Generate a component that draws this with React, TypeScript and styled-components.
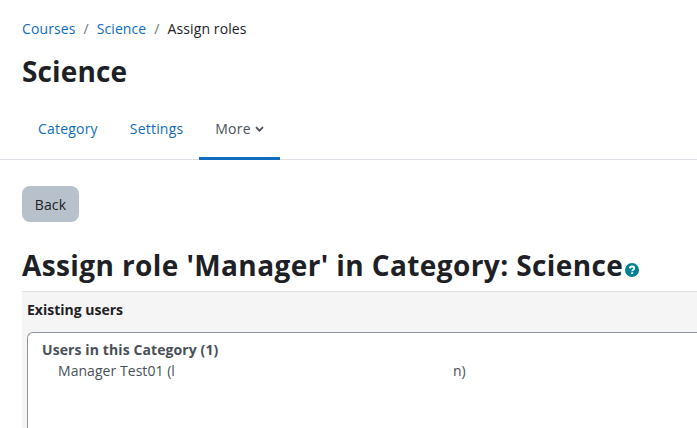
import React from 'react'
import styled, { createGlobalStyle } from 'styled-components'

const GlobalStyle = createGlobalStyle`
    html, body {
        margin: 0;
        padding: 0;
        background: #fff;
        overflow: hidden;
    }
    body {
        font-family: "Open Sans", "Noto Sans", "Liberation Sans", sans-serif;
        font-size: 14px;
        letter-spacing: 0.15px;
        color: #1d2125;
    }
`

const Page = styled.div`
    width: 697px;
    height: 428px;
    overflow: hidden;
`

const Header = styled.header`
    padding: 19px 22px 0;
`

const Breadcrumb = styled.nav`
    display: flex;
    align-items: center;
    height: 20px;
    font-size: 14px;
    line-height: 20px;
    letter-spacing: 0.1px;
`

const Crumb = styled.a`
    color: #0f6cbf;
`

const Separator = styled.span`
    color: #6a737b;
    margin: 0 8px;
`

const Title = styled.h1`
    margin: 10px 0 0;
    font-size: 28px;
    line-height: 44px;
    font-weight: 700;
    letter-spacing: 0.15px;
`

const Tabs = styled.nav`
    display: flex;
    height: 59px;
    margin-top: 7px;
    padding-left: 22px;
    border-bottom: 1px solid #dee2e6;
    letter-spacing: 0.2px;
`

const Tab = styled.a<{ $active?: boolean }>`
    display: flex;
    align-items: center;
    gap: 4px;
    height: 57px;
    padding: 0 16px;
    color: ${p => (p.$active ? '#495057' : '#0f6cbf')};
    border-bottom: 3px solid ${p => (p.$active ? '#0f6cbf' : 'transparent')};
`

const Main = styled.main`
    padding: 26px 0 0 22px;
`

const BackButton = styled.button`
    display: block;
    width: 57px;
    height: 36px;
    padding: 0;
    border: 0;
    border-radius: 8px;
    background: #b8c1cb;
    color: #1d2125;
    font: inherit;
    letter-spacing: inherit;
`

const Heading = styled.h2`
    display: flex;
    align-items: center;
    margin: 21px 0 0;
    font-size: 28px;
    line-height: 44px;
    font-weight: 700;
    letter-spacing: 0.4px;
    white-space: nowrap;
`

const HelpIcon = styled.svg`
    width: 14px;
    height: 14px;
    margin: 9px 0 0 2px;
`

const Panel = styled.section`
    margin-top: 4px;
    padding: 8px 0 0 5px;
    height: 200px;
    background: #f5f5f5;
    border-top: 1px solid #dee2e6;
`

const PanelLabel = styled.div`
    font-weight: 700;
    line-height: 20px;
    letter-spacing: 0;
`

const ListBox = styled.div`
    margin-top: 12px;
    height: 120px;
    padding: 7px 14px;
    background: #fff;
    border: 1px solid #8f959e;
    border-right: 0;
    border-radius: 6px 0 0 0;
`

const GroupLabel = styled.div`
    font-weight: 700;
    color: #495057;
    line-height: 20px;
    letter-spacing: 0.1px;
`

const Option = styled.div`
    display: flex;
    padding-left: 16px;
    color: #495057;
    line-height: 22px;
    letter-spacing: 0.05px;
    white-space: pre;
`

const Redacted = styled.span`
    width: 278px;
`

const App = () => {
    return (
        <Page>
            <GlobalStyle />
            <Header>
                <Breadcrumb>
                    <Crumb>Courses</Crumb>
                    <Separator>/</Separator>
                    <Crumb>Science</Crumb>
                    <Separator>/</Separator>
                    <span>Assign roles</span>
                </Breadcrumb>
                <Title>Science</Title>
            </Header>
            <Tabs>
                <Tab>Category</Tab>
                <Tab>Settings</Tab>
                <Tab $active>
                    More
                    <svg width="9" height="6" viewBox="0 0 9 6" fill="none">
                        <path d="M1 1.2 4.5 4.7 8 1.2" stroke="#495057" strokeWidth="1.8" />
                    </svg>
                </Tab>
            </Tabs>
            <Main>
                <BackButton>Back</BackButton>
                <Heading>
                    Assign role 'Manager' in Category: Science
                    <HelpIcon viewBox="0 0 14 14">
                        <circle cx="7" cy="7" r="7" fill="#008196" />
                        <path d="M4.8 5.4C4.9 4.2 5.8 3.5 7.1 3.5 8.4 3.5 9.3 4.3 9.3 5.3 9.3 6.9 7.2 6.7 7.2 8.2" fill="none" stroke="#fff" strokeWidth="1.8" />
                        <rect x="6.2" y="9.2" width="2" height="1.9" fill="#fff" />
                    </HelpIcon>
                </Heading>
                <Panel>
                    <PanelLabel>Existing users</PanelLabel>
                    <ListBox>
                        <GroupLabel>Users in this Category (1)</GroupLabel>
                        <Option>
                            Manager Test01 (l
                            <Redacted />
                            n)
                        </Option>
                    </ListBox>
                </Panel>
            </Main>
        </Page>
    )
}

export default App
